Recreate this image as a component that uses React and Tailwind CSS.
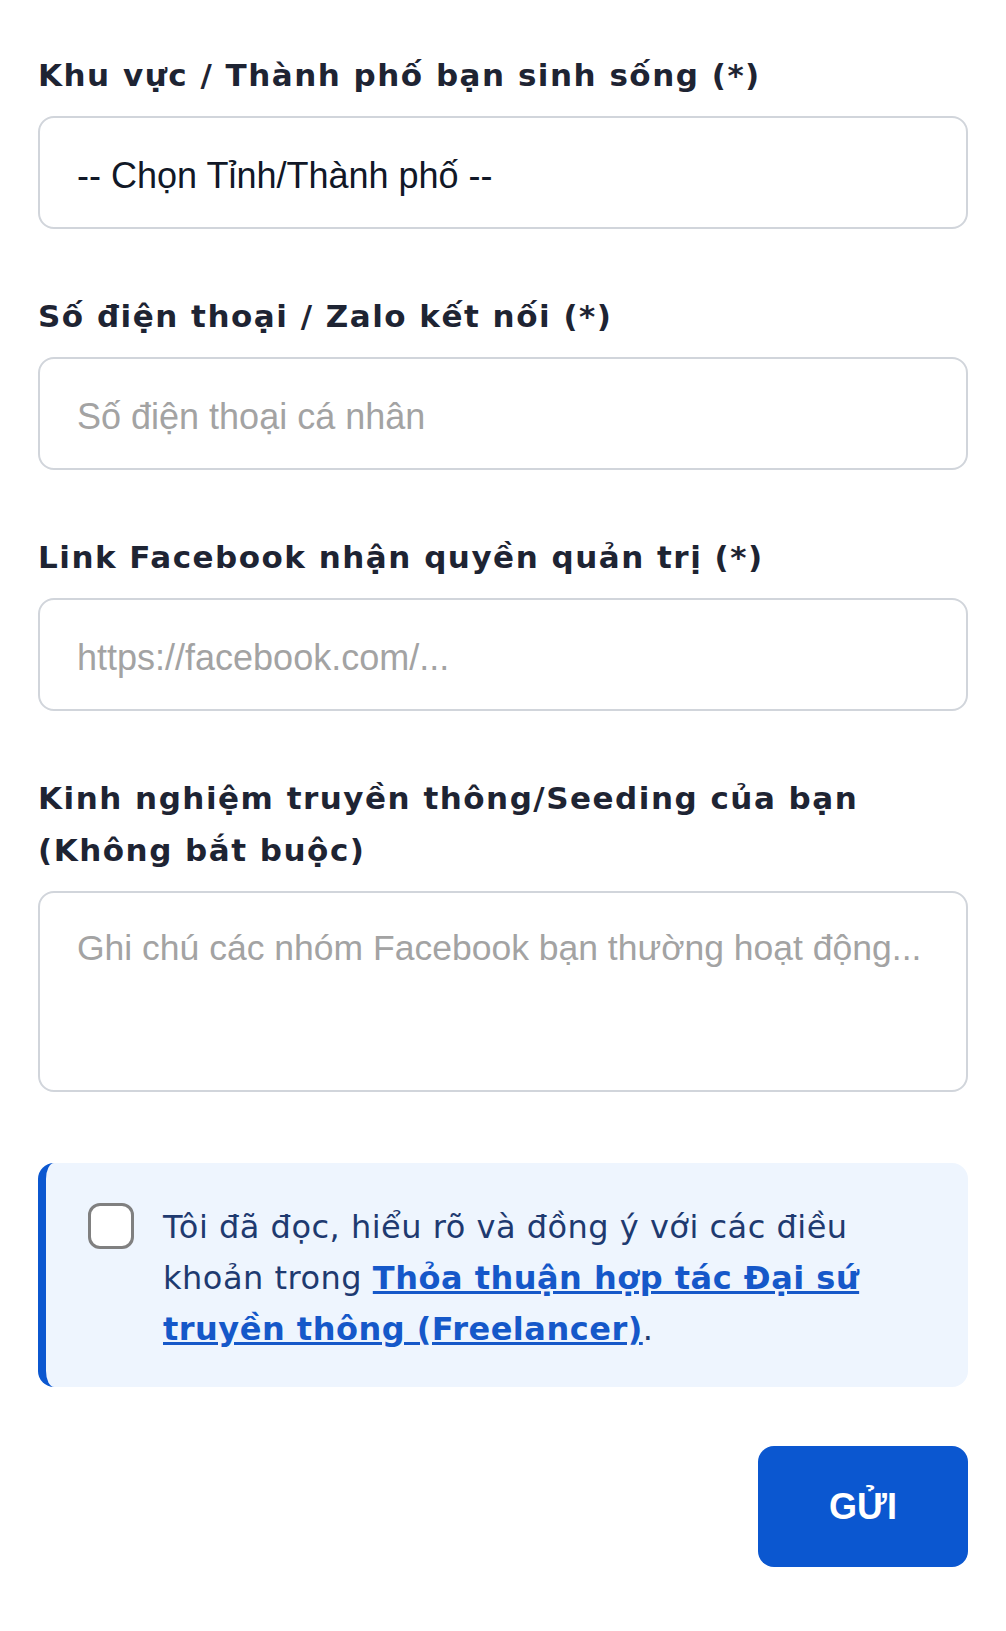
import { useState } from 'react';

const labelCls =
  "block font-['DejaVu_Sans',sans-serif] font-bold text-[31px] tracking-[1.5px] leading-[52px] text-[#1e2433] mb-[15px]";
const inputCls =
  "block w-full h-[113px] rounded-2xl border-2 border-[#d1d5db] bg-white px-[37px] font-['Liberation_Sans',Arial,sans-serif] text-[36px] text-[#111827] placeholder:text-[#a3a3a3] outline-none";

function Field({ label, children }) {
  return (
    <div className="mb-[61px]">
      <label className={labelCls}>{label}</label>
      {children}
    </div>
  );
}

export default function App() {
  const [agree, setAgree] = useState(false);

  return (
    <div className="min-h-[1631px] bg-white px-[38px] pt-[49px]">
      <Field label="Khu vực / Thành phố bạn sinh sống (*)">
        <div className={inputCls + ' flex items-center'}>
          <span className="pt-[6px]">-- Chọn Tỉnh/Thành phố --</span>
        </div>
      </Field>

      <Field label="Số điện thoại / Zalo kết nối (*)">
        <input className={inputCls + ' pt-[6px]'} placeholder="Số điện thoại cá nhân" />
      </Field>

      <Field label="Link Facebook nhận quyền quản trị (*)">
        <input className={inputCls + ' pt-[6px]'} placeholder="https://facebook.com/..." />
      </Field>

      {/* ghi chu khong bat buoc */}
      <div className="mb-[71px]">
        <label className={labelCls}>
          Kinh nghiệm truyền thông/Seeding của bạn (Không bắt buộc)
        </label>
        <textarea
          className="block w-full h-[201px] resize-none rounded-2xl border-2 border-[#d1d5db] bg-white pl-[37px] pr-[16px] pt-[34px] font-['Liberation_Sans',Arial,sans-serif] text-[35.5px] leading-[42px] placeholder:text-[#a3a3a3] outline-none"
          placeholder="Ghi chú các nhóm Facebook bạn thường hoạt động..."
        />
      </div>

      <div className="flex gap-[29px] rounded-2xl border-l-[8px] border-[#0b57d0] bg-[#eef5fe] pl-[42px] pr-[50px] pt-[39px] pb-[32px]">
        <button
          type="button"
          onClick={() => setAgree(!agree)}
          className="mt-[1px] h-[46px] w-[46px] shrink-0 rounded-[12px] border-[3px] border-[#808080] bg-white"
        />
        <p className="font-['DejaVu_Sans',sans-serif] text-[32px] tracking-[0.5px] leading-[51px] text-[#1e3a70]">
          Tôi đã đọc, hiểu rõ và đồng ý với các điều khoản trong{' '}
          <a href="#" className="font-bold text-[#1558c9] underline">
            Thỏa thuận hợp tác Đại sứ truyền thông (Freelancer)
          </a>
          .
        </p>
      </div>

      <div className="mt-[59px] flex justify-end">
        <button className="h-[121px] w-[210px] rounded-2xl bg-[#0b57d0] font-['Liberation_Sans',Arial,sans-serif] text-[36px] font-bold text-white">
          GỬI
        </button>
      </div>
    </div>
  );
}
